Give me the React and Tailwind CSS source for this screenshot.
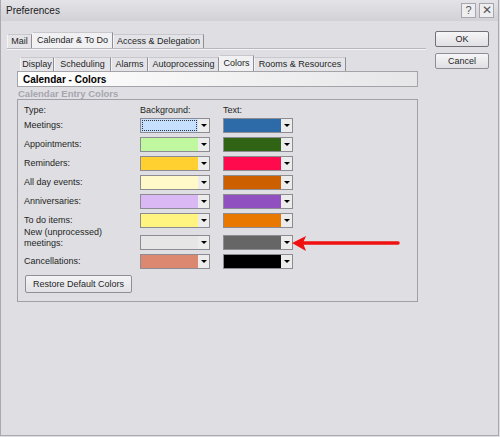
import React from "react";

const rows = [
  { label: ["Meetings:"], bg: "bg-[#c6e0ff]", fg: "bg-[#2c6aa8]", focus: true },
  { label: ["Appointments:"], bg: "bg-[#c0f8a0]", fg: "bg-[#306414]" },
  { label: ["Reminders:"], bg: "bg-[#ffd030]", fg: "bg-[#ff0a4c]" },
  { label: ["All day events:"], bg: "bg-[#fff8c8]", fg: "bg-[#cc6000]" },
  { label: ["Anniversaries:"], bg: "bg-[#dab8f4]", fg: "bg-[#9050c0]" },
  { label: ["To do items:"], bg: "bg-[#fff480]", fg: "bg-[#e87800]" },
  { label: ["New (unprocessed)", "meetings:"], bg: "bg-[#e6e6e6]", fg: "bg-[#666666]", tall: true },
  { label: ["Cancellations:"], bg: "bg-[#dc8870]", fg: "bg-[#000000]" },
];

function Swatch({ color, focus }) {
  return (
    <div className="flex h-[15px] w-[70px] border border-[#8c8c92] bg-[#f0f0f0]">
      <div className={`flex-1 ${color} ${focus ? "outline outline-1 outline-dotted outline-[#333] -outline-offset-2" : ""}`} />
      <div className="flex w-[11px] items-center justify-center bg-[#ececec]">
        <div className="h-0 w-0 border-x-[3px] border-t-[3px] border-x-transparent border-t-black" />
      </div>
    </div>
  );
}

function Tab({ w, children, selected }) {
  return (
    <div
      className={`flex items-center justify-center border-r border-l border-t border-l-[#f4f4f6] border-r-[#8e8e94] border-t-[#c8c8cc] ${
        selected ? "h-[16px] bg-[#f1f1f3]" : "h-[14px] bg-[#e4e4e8]"
      } ${w}`}
    >
      {children}
    </div>
  );
}

export default function App() {
  return (
    <div
      className="relative h-[437px] w-[500px] bg-[#dfdee3] text-[9px] leading-[11px] text-[#1e1e1e]"
      style={{ fontFamily: '"Liberation Sans", Arial, sans-serif' }}
    >
      <div className="flex h-[436px] w-[499px] flex-col border border-[#a9a9ae] border-t-0">
        {/* Title bar */}
        <div className="flex h-[21px] items-center justify-between bg-gradient-to-b from-[#e4e4e8] to-[#d2d2d6] pl-[5px] pr-[4px]">
          <span className="text-[10px] text-[#202020]">Preferences</span>
          <div className="flex gap-[3px]">
            <div className="flex h-[15px] w-[15px] items-center justify-center border border-[#a6a6ac] bg-[#eeeef0] text-[11px] text-[#555]">?</div>
            <div className="flex h-[15px] w-[15px] items-center justify-center border border-[#a6a6ac] bg-[#eeeef0] text-[12px] text-[#555]">✕</div>
          </div>
        </div>

        {/* Body */}
        <div className="flex">
          <div className="ml-[6px] mt-[11px] w-[419px]">
            {/* Main tabs */}
            <div className="flex items-end">
              <Tab w="w-[25px]">Mail</Tab>
              <Tab w="w-[81px]" selected>Calendar &amp; To Do</Tab>
              <Tab w="w-[91px]">Access &amp; Delegation</Tab>
            </div>
            <div className="h-px bg-[#b8b8bc]" />
            <div className="h-px bg-[#f4f4f6]" />

            {/* Sub tabs */}
            <div className="ml-[13px] mt-[5px] flex items-end">
              <Tab w="w-[34px]">Display</Tab>
              <Tab w="w-[57px]">Scheduling</Tab>
              <Tab w="w-[37px]">Alarms</Tab>
              <Tab w="w-[71px]">Autoprocessing</Tab>
              <Tab w="w-[35px]" selected>Colors</Tab>
              <Tab w="w-[92px]">Rooms &amp; Resources</Tab>
            </div>

            {/* Header */}
            <div className="ml-[10px] flex h-[16px] w-[401px] items-center border border-[#a4a4a8] bg-gradient-to-r from-white to-[#e6e6e8] pl-[5px] text-[10px] font-bold text-black">
              Calendar - Colors
            </div>

            <div className="ml-[11px] mt-[1px] text-[9.5px] font-bold text-[#a6a6ae]">Calendar Entry Colors</div>

            {/* Group */}
            <div className="ml-[10px] w-[401px] border border-[#a0a0a6] pb-[8px] pl-[6px] pt-[4px]">
              <div className="flex h-[12px] items-center">
                <div className="w-[116px]">Type:</div>
                <div className="w-[83px]">Background:</div>
                <div>Text:</div>
              </div>
              {rows.map((r, i) => (
                <div key={i} className={`flex items-center ${r.tall ? "h-[22px]" : "h-[19px]"}`}>
                  <div className={`w-[116px] ${r.tall ? "-mt-[6px]" : ""}`}>
                    {r.label.map((l, j) => (
                      <div key={j}>{l}</div>
                    ))}
                  </div>
                  <div className={`w-[83px] ${r.tall ? "mt-[3px]" : ""}`}>
                    <Swatch color={r.bg} focus={r.focus} />
                  </div>
                  <div className={r.tall ? "mt-[3px]" : ""}>
                    <Swatch color={r.fg} />
                  </div>
                </div>
              ))}
              <div className="ml-[1px] mt-[4px] flex h-[18px] w-[107px] items-center justify-center rounded-[2px] border border-[#8e8e94] bg-gradient-to-b from-[#f4f4f6] to-[#e2e2e6] text-[9px]">
                Restore Default Colors
              </div>
            </div>
          </div>

          {/* Right buttons */}
          <div className="ml-[9px] mt-[10px] flex flex-col gap-[6px]">
            <div className="flex h-[16px] w-[54px] items-center justify-center rounded-[2px] border border-[#707076] bg-gradient-to-b from-[#f6f6f8] to-[#e0e0e4]">OK</div>
            <div className="flex h-[16px] w-[54px] items-center justify-center rounded-[2px] border border-[#8e8e94] bg-gradient-to-b from-[#f6f6f8] to-[#e0e0e4]">Cancel</div>
          </div>
        </div>
      </div>

      {/* Red arrow annotation */}
      <svg className="absolute left-[292px] top-[235px]" width="108" height="18" viewBox="0 0 108 18">
        <line x1="10" y1="8" x2="106" y2="8" stroke="#f01010" strokeWidth="3.5" strokeLinecap="round" />
        <polygon points="0,8 14,1 11,8 14,16" fill="#f01010" />
      </svg>
    </div>
  );
}
